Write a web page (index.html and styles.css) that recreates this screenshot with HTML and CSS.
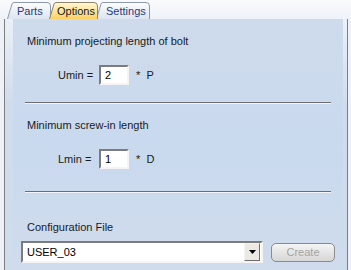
FILE: index.html
```html
<!DOCTYPE html>
<html lang="en">

<head>
    <meta charset="UTF-8">
    <title>Options</title>
    <link rel="stylesheet" href="styles.css">
</head>

<body>
    <div class="tabs">
        <div class="tab tab-parts">
            <svg class="tab-shape" width="44" height="17" viewBox="0 0 44 17">
                <path d="M0.5 17 L5 2 Q5.6 0.5 7 0.5 H40 Q43.5 0.5 43.5 4 V17" />
            </svg>
            <span>Parts</span>
        </div>
        <div class="tab tab-options active">
            <svg class="tab-shape" width="49" height="17" viewBox="0 0 49 17">
                <defs>
                    <linearGradient id="gold" x1="0" y1="0" x2="0" y2="1">
                        <stop offset="0" stop-color="#fff7d6" />
                        <stop offset="1" stop-color="#fcd164" />
                    </linearGradient>
                </defs>
                <path d="M0.5 17 L5 2 Q5.6 0.5 7 0.5 H45 Q48.5 0.5 48.5 4 V17" />
            </svg>
            <span>Options</span>
        </div>
        <div class="tab tab-settings">
            <svg class="tab-shape" width="54" height="17" viewBox="0 0 54 17">
                <defs>
                    <linearGradient id="pale" x1="0" y1="0" x2="0" y2="1">
                        <stop offset="0" stop-color="#fcfdfe" />
                        <stop offset="1" stop-color="#dde5f0" />
                    </linearGradient>
                </defs>
                <path d="M0.5 17 L5 2 Q5.6 0.5 7 0.5 H50 Q53.5 0.5 53.5 4 V17" />
            </svg>
            <span>Settings</span>
        </div>
    </div>

    <div class="frame">
        <div class="panel">
            <div class="heading">Minimum projecting length of bolt</div>
            <div class="param">
                <label class="param-name" for="umin">Umin =</label>
                <input class="num" id="umin" value="2">
                <span class="param-unit">*&nbsp;&nbsp;P</span>
            </div>
            <div class="sep"></div>

            <div class="heading heading-2">Minimum screw-in length</div>
            <div class="param param-2">
                <label class="param-name" for="lmin">Lmin =</label>
                <input class="num" id="lmin" value="1">
                <span class="param-unit">*&nbsp;&nbsp;D</span>
            </div>
            <div class="sep sep-2"></div>

            <div class="heading heading-cfg">Configuration File</div>
            <div class="config-row">
                <div class="combo">
                    <span class="combo-text">USER_03</span>
                    <span class="combo-drop">
                        <svg width="7" height="4" viewBox="0 0 7 4">
                            <path d="M0 0 H7 L3.5 4 Z" fill="#000" />
                        </svg>
                    </span>
                </div>
                <button class="create" disabled>Create</button>
            </div>
        </div>
    </div>
</body>

</html>
```

FILE: styles.css
```css
* {
    box-sizing: border-box;
}

body {
    margin: 0;
    height: 270px;
    overflow: hidden;
    background: linear-gradient(#f9fafc, #eef2f8 19px);
    font-family: "Liberation Sans", Arial, sans-serif;
    font-size: 11px;
    color: #1a1a1a;
}

/* tab strip */

.tabs {
    display: flex;
    height: 19px;
    padding: 2px 0 0 7px;
}

.tab {
    position: relative;
    height: 17px;
    display: flex;
    align-items: center;
    color: #1d3a82;
}

.tab>span {
    position: relative;
    padding-top: 1px;
}

.tab-shape {
    position: absolute;
    left: 0;
    top: 0;
}

.tab-shape path {
    fill: url(#pale);
    stroke: #8d99ab;
    stroke-width: 1;
}

.tab-parts {
    width: 44px;
    padding-left: 10px;
}

.tab-options {
    width: 49px;
    margin-left: -2px;
    padding-left: 8px;
    z-index: 2;
    color: #1a1a1a;
}

.tab-options .tab-shape path {
    fill: url(#gold);
    stroke: #8f8568;
}

.tab-settings {
    width: 54px;
    margin-left: -2px;
    padding-left: 10px;
}

/* frame */

.frame {
    height: 251px;
    margin: 0 3px 0 4px;
    padding: 0 4px 0 8px;
    border-left: 1px solid #7f7f7f;
    border-right: 1px solid #7f7f7f;
    background: linear-gradient(#eaf0f8, #cfdcec 85px);
}

.panel {
    height: 100%;
    padding: 16px 12px 0 14px;
    background: linear-gradient(#cedbec, #c9d9ee 130px, #d0dcec);
}

.heading {
    line-height: 13px;
    height: 13px;
    white-space: nowrap;
}

.heading-2 {
    margin-top: 15px;
}

.heading-cfg {
    margin-top: 28px;
}

.param {
    display: flex;
    align-items: center;
    height: 20px;
    margin-top: 17px;
    padding-left: 31px;
}

.param-2 {
    margin-top: 17px;
}

.param-name {
    width: 41px;
    white-space: nowrap;
}

.num {
    width: 30px;
    height: 20px;
    padding: 0 0 0 4px;
    border: 2px solid;
    border-color: #7c7c7c #f4f4f4 #f4f4f4 #7c7c7c;
    background: #fff;
    font-family: inherit;
    font-size: 11px;
    color: #000;
    outline: none;
}

.param-unit {
    margin-left: 7px;
}

.sep {
    height: 2px;
    margin: 17px 0 0 -2px;
    border-top: 1px solid #6e6e6e;
    border-bottom: 1px solid #f2f4f8;
}

.sep-2 {
    margin-top: 22px;
}

/* configuration row */

.config-row {
    display: flex;
    align-items: center;
    margin: 7px -8px 0 -6px;
}

.combo {
    flex: none;
    display: flex;
    align-items: center;
    width: 242px;
    height: 22px;
    padding: 0 1px 0 4px;
    border: 2px solid;
    border-color: #7c7c7c #f4f4f4 #f4f4f4 #7c7c7c;
    background: #fff;
    color: #000;
}

.combo-text {
    flex: 1;
    font-size: 11px;
}

.combo-drop {
    display: flex;
    align-items: center;
    justify-content: center;
    width: 16px;
    height: 18px;
    border: 1px solid;
    border-color: #f4f4f4 #6e6e6e #6e6e6e #f4f4f4;
    background: #ece9e2;
}

.create {
    flex: none;
    width: 64px;
    height: 19px;
    margin-left: 8px;
    padding: 0;
    border: 1px solid #8a8a8a;
    border-radius: 5px;
    background: linear-gradient(#f5f5f5, #e2e2e2 60%, #d6d6d6);
    font-family: inherit;
    font-size: 11px;
    color: #a3a3a3;
}
```
